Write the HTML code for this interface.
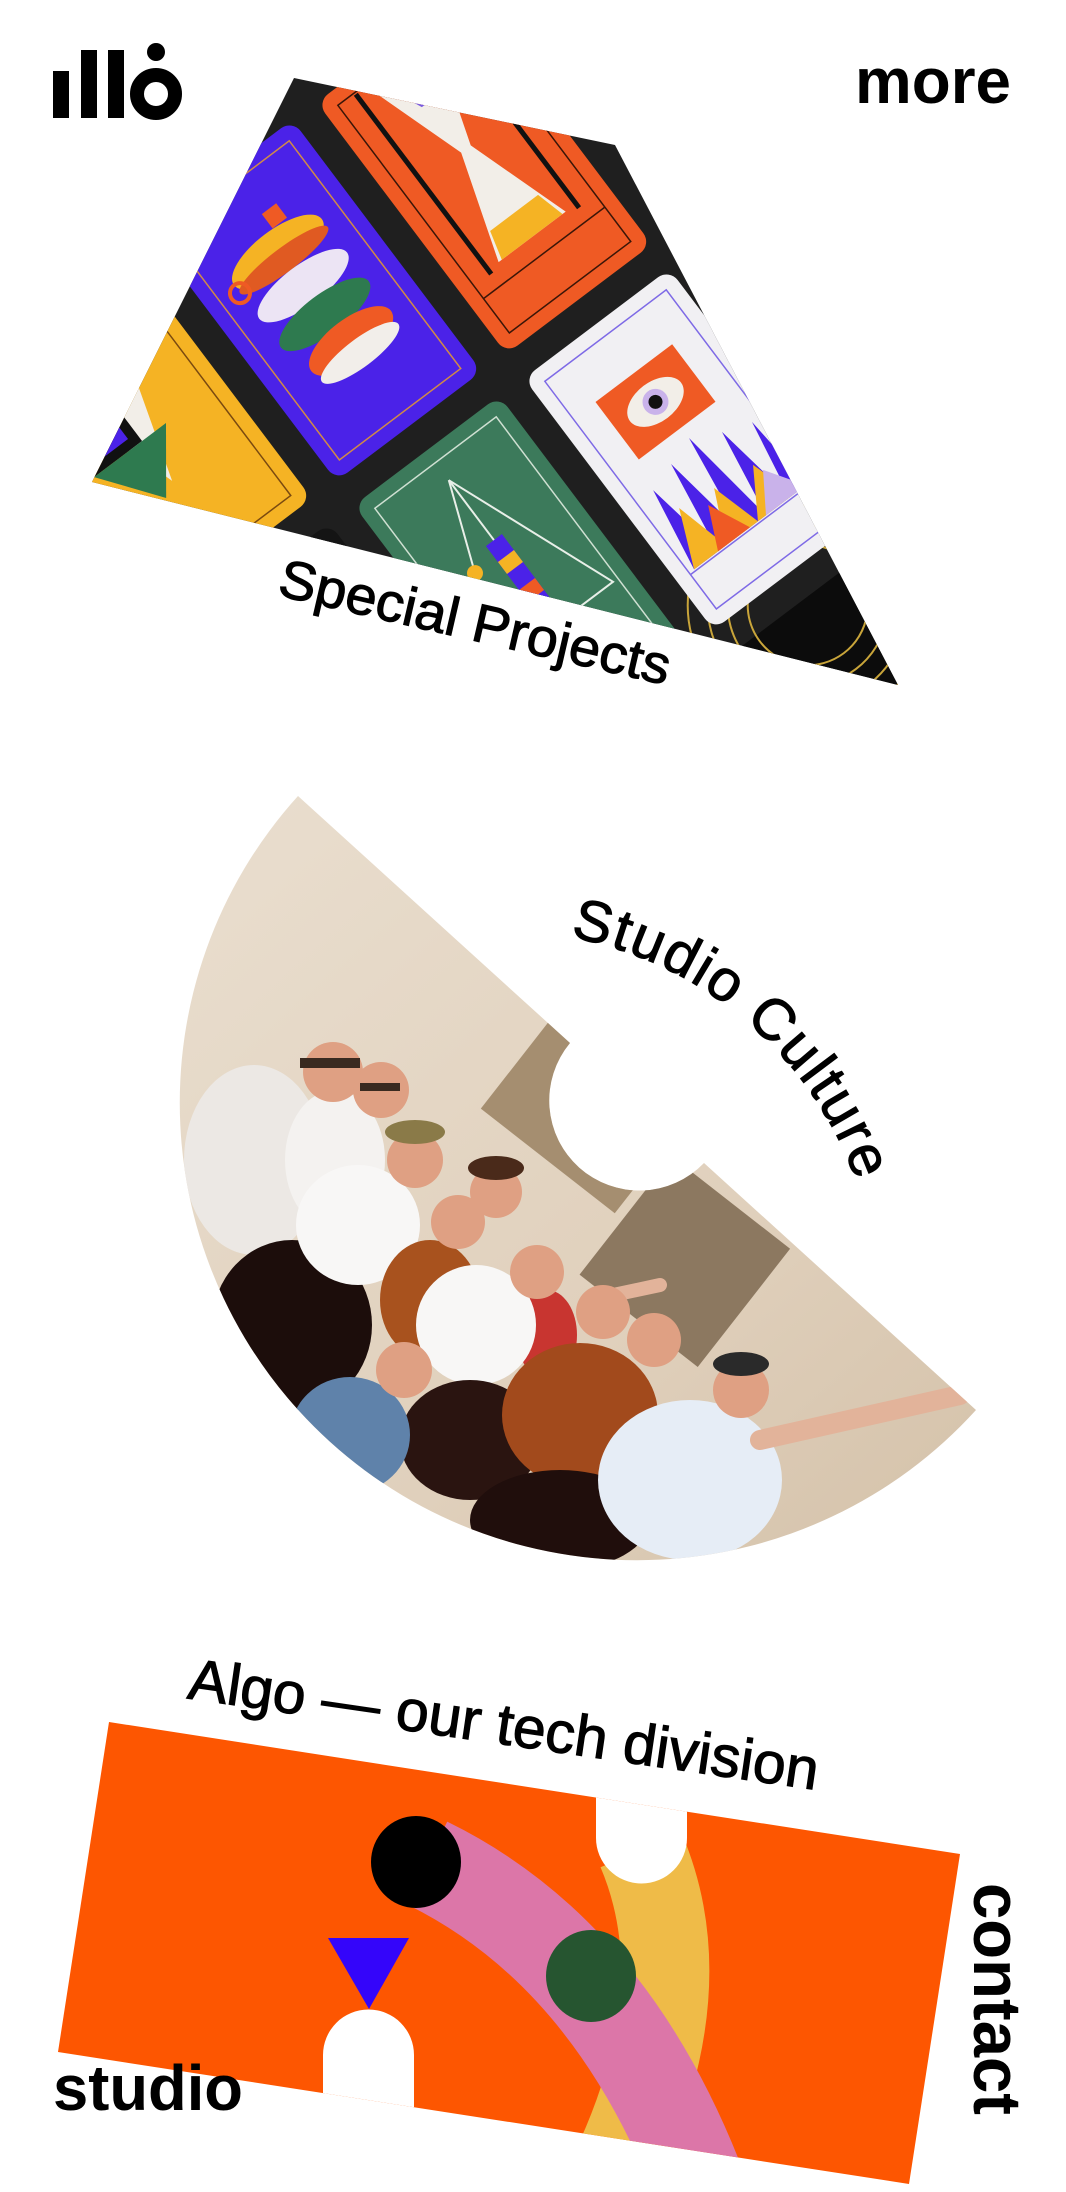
<!DOCTYPE html>
<html><head><meta charset="utf-8">
<style>
html,body{margin:0;padding:0;background:#fff;}
body{width:1066px;height:2192px;overflow:hidden;}
svg{display:block}
text{font-family:"Liberation Sans",sans-serif;fill:#000;}
.lbl{stroke:#000;stroke-width:1.1px;}
.nav{font-weight:bold;}
</style></head>
<body>
<svg width="1066" height="2192" viewBox="0 0 1066 2192" xmlns="http://www.w3.org/2000/svg">
<defs>
  <clipPath id="dia"><polygon points="294,78 615,145 898,685 92,482"/></clipPath>
  <clipPath id="disc"><path d="M298,796 A457,457 0 0 0 976,1410 L704,1163 A90,90 0 0 1 570,1043 Z"/></clipPath>
  <clipPath id="quad"><polygon points="109,1722 960,1854 909,2184 58,2052"/></clipPath>
  <linearGradient id="wall" x1="0" y1="0" x2="1" y2="1">
    <stop offset="0" stop-color="#eadfd0"/><stop offset="0.6" stop-color="#e0d0bc"/><stop offset="1" stop-color="#d2bfa6"/>
  </linearGradient>
  <path id="scarc" d="M570,937 A377,377 0 0 1 870,1230"/>
</defs>

<!-- logo -->
<rect x="53" y="71" width="16" height="47" fill="#000"/>
<rect x="81" y="50" width="16" height="68" fill="#000"/>
<rect x="108" y="50" width="16" height="68" fill="#000"/>
<circle cx="156" cy="94" r="19" fill="none" stroke="#000" stroke-width="14"/>
<circle cx="156" cy="52" r="9" fill="#000"/>
<text x="855" y="103" font-size="64" class="nav" textLength="156" lengthAdjust="spacingAndGlyphs">more</text>

<!-- special projects -->
<g clip-path="url(#dia)">
  <rect x="0" y="0" width="1066" height="720" fill="#1f1f1f"/>
  <!-- dark cards -->
  <g transform="translate(107,24) rotate(-37)"><rect x="-91" y="-157" width="182" height="315" rx="14" fill="#262626"/></g>
  <g transform="translate(351,703) rotate(-37)"><rect x="-91" y="-157" width="182" height="315" rx="14" fill="#141414"/></g>
  <g transform="translate(898,725) rotate(-37)"><rect x="-91" y="-157" width="182" height="315" rx="14" fill="#0c0c0c"/>
    <g fill="none" stroke="#c9a53a" stroke-width="2"><circle cx="0" cy="-150" r="60"/><circle cx="0" cy="-150" r="80"/><circle cx="0" cy="-150" r="100"/><circle cx="0" cy="-150" r="120"/></g></g>
  <!-- purple -->
  <g transform="translate(314,300) rotate(-37)">
    <rect x="-91" y="-157" width="182" height="315" rx="14" fill="#4b22e8"/>
    <rect x="-76" y="-142" width="152" height="285" fill="none" stroke="#d08a48" stroke-width="1.5"/>
    <ellipse cx="0" cy="-60" rx="55" ry="22" fill="#f5b324"/>
    <ellipse cx="0" cy="-50" rx="55" ry="12" fill="#e05a22"/>
    <ellipse cx="0" cy="-18" rx="55" ry="20" fill="#ece4f4"/>
    <ellipse cx="0" cy="18" rx="55" ry="20" fill="#2e7a4f"/>
    <ellipse cx="5" cy="55" rx="50" ry="22" fill="#ef5a24"/>
    <ellipse cx="5" cy="70" rx="48" ry="14" fill="#f2eeea"/>
    <circle cx="-55" cy="-50" r="10" fill="none" stroke="#ef5a24" stroke-width="4"/>
    <rect x="10" y="-100" width="18" height="18" fill="#ef5a24"/>
  </g>
  <!-- orange -->
  <g transform="translate(484,173) rotate(-37)">
    <rect x="-91" y="-157" width="182" height="315" rx="14" fill="#ef5a24"/>
    <rect x="-76" y="-142" width="152" height="285" fill="none" stroke="#3a1608" stroke-width="1.5"/>
    <line x1="-76" y1="100" x2="76" y2="100" stroke="#3a1608" stroke-width="1.5"/>
    <polygon points="-42,-140 42,-140 6,-30 42,80 -42,80 -6,-30" fill="#f2eee8"/>
    <polygon points="-30,-135 30,-135 10,-90 -10,-90" fill="#7a5ae0"/>
    <polygon points="-30,50 30,50 38,80 -38,80" fill="#f5b324"/>
    <line x1="-55" y1="-140" x2="-55" y2="85" stroke="#111" stroke-width="5"/>
    <line x1="55" y1="-140" x2="55" y2="85" stroke="#111" stroke-width="5"/>
  </g>
  <!-- white -->
  <g transform="translate(691,449) rotate(-37)">
    <rect x="-91" y="-157" width="182" height="315" rx="14" fill="#f1f0f3"/>
    <rect x="-76" y="-142" width="152" height="285" fill="none" stroke="#7e6ae6" stroke-width="1.5"/>
    <line x1="-76" y1="100" x2="76" y2="100" stroke="#7e6ae6" stroke-width="1.5"/>
    <rect x="-48" y="-95" width="96" height="72" fill="#ef5a24"/>
    <ellipse cx="0" cy="-59" rx="32" ry="20" fill="#f2eee8"/>
    <circle cx="0" cy="-59" r="13" fill="#c9b2ea"/><circle cx="0" cy="-59" r="7" fill="#111"/>
    <polygon points="-70,98 -55,10 -40,98 -25,0 -10,98 5,-10 20,98 35,5 50,98 65,15 72,98" fill="#4b22e8"/>
    <polygon points="-70,98 -45,40 -30,98 -5,45 10,98 40,50 55,98" fill="#f5b324"/>
    <polygon points="-40,98 -20,55 0,98" fill="#ef5a24"/>
    <polygon points="20,98 45,60 70,98" fill="#c9b2ea"/>
  </g>
  <!-- green -->
  <g transform="translate(521,576) rotate(-37)">
    <rect x="-91" y="-157" width="182" height="315" rx="14" fill="#3c7a5b"/>
    <rect x="-76" y="-142" width="152" height="285" fill="none" stroke="#cfe0d2" stroke-width="1.5"/>
    <polyline points="0,-120 -70,60 70,60 0,-120" fill="none" stroke="#e8efe8" stroke-width="2"/>
    <line x1="0" y1="-120" x2="0" y2="-40" stroke="#e8efe8" stroke-width="2"/>
    <rect x="-10" y="-45" width="20" height="110" fill="#4b22e8"/>
    <rect x="-10" y="-25" width="20" height="15" fill="#f5b324"/>
    <rect x="-10" y="10" width="20" height="15" fill="#ef5a24"/>
    <circle cx="-35" cy="-30" r="8" fill="#f5b324"/>
  </g>
  <!-- yellow -->
  <g transform="translate(144,427) rotate(-37)">
    <rect x="-91" y="-157" width="182" height="315" rx="14" fill="#f5b324"/>
    <rect x="-76" y="-142" width="152" height="285" fill="none" stroke="#7a4a10" stroke-width="1.5"/>
    <polygon points="-60,-100 40,-100 -10,60" fill="#f2eee8"/>
    <rect x="-70" y="-80" width="60" height="90" fill="#111"/>
    <rect x="-70" y="-40" width="50" height="40" fill="#4b22e8"/>
    <polygon points="-70,10 20,10 -25,70" fill="#2e7a4f"/>
    <polygon points="-70,-110 0,-110 -35,-60" fill="#c9b2ea"/>
  </g>
</g>
<text x="0" y="0" font-size="54" class="lbl" text-anchor="middle" textLength="400" lengthAdjust="spacingAndGlyphs" transform="translate(471,640) rotate(13)">Special Projects</text>

<!-- studio culture -->
<g clip-path="url(#disc)">
  <rect x="150" y="780" width="900" height="800" fill="url(#wall)"/>
  <g transform="rotate(38 550 1150)">
    <rect x="470" y="1010" width="170" height="150" fill="#a58e70"/>
    <rect x="650" y="1080" width="150" height="150" fill="#8c7860"/>
  </g>
  <ellipse cx="254" cy="1160" rx="70" ry="95" fill="#ece8e4"/>
  <ellipse cx="335" cy="1160" rx="50" ry="70" fill="#f4f2f0"/>
  <ellipse cx="292" cy="1325" rx="80" ry="85" fill="#1c0d0b"/>
  <ellipse cx="358" cy="1225" rx="62" ry="60" fill="#f8f7f6"/>
  <ellipse cx="430" cy="1300" rx="50" ry="60" fill="#a8521e"/>
  <ellipse cx="547" cy="1335" rx="30" ry="45" fill="#c83530"/>
  <ellipse cx="476" cy="1325" rx="60" ry="60" fill="#f8f7f6"/>
  <ellipse cx="470" cy="1440" rx="70" ry="60" fill="#2a1410"/>
  <ellipse cx="350" cy="1435" rx="60" ry="58" fill="#5f82aa"/>
  <ellipse cx="580" cy="1415" rx="78" ry="72" fill="#a24a1c"/>
  <ellipse cx="560" cy="1520" rx="90" ry="50" fill="#200e0c"/>
  <ellipse cx="690" cy="1480" rx="92" ry="80" fill="#e6edf6"/>
  <path d="M760,1440 L960,1395" stroke="#e2b39a" stroke-width="20" stroke-linecap="round"/>
  <path d="M590,1300 L660,1285" stroke="#e2b39a" stroke-width="14" stroke-linecap="round"/>
  <g fill="#dfa083">
    <circle cx="333" cy="1072" r="30"/><circle cx="381" cy="1090" r="28"/>
    <circle cx="415" cy="1160" r="28"/><circle cx="496" cy="1192" r="26"/>
    <circle cx="458" cy="1222" r="27"/><circle cx="537" cy="1272" r="27"/>
    <circle cx="603" cy="1312" r="27"/><circle cx="654" cy="1340" r="27"/>
    <circle cx="404" cy="1370" r="28"/><circle cx="741" cy="1390" r="28"/>
  </g>
  <g fill="#3a2a20">
    <path d="M300,1058 h60 v10 h-60z"/><path d="M360,1083 h40 v8 h-40z"/>
    <ellipse cx="415" cy="1132" rx="30" ry="12" fill="#8a7a48"/>
    <ellipse cx="496" cy="1168" rx="28" ry="12" fill="#4a2a1a"/>
    <ellipse cx="741" cy="1364" rx="28" ry="12" fill="#2a2a2a"/>
  </g>
</g>
<text font-size="58" class="lbl" letter-spacing="2"><textPath href="#scarc">Studio Culture</textPath></text>

<!-- algo -->
<text x="0" y="0" font-size="58" class="lbl" text-anchor="middle" textLength="636" lengthAdjust="spacingAndGlyphs" transform="translate(501,1744) rotate(8.3)">Algo — our tech division</text>
<g clip-path="url(#quad)">
  <rect x="0" y="1700" width="1066" height="492" fill="#fd5601"/>
  <path d="M641,1850 Q705,2000 600,2200" stroke="#efbb48" stroke-width="88" fill="none"/>
  <path d="M427,1863 Q615,1955 705,2200" stroke="#dc76a8" stroke-width="92" fill="none"/>
  <ellipse cx="416" cy="1862" rx="45" ry="46" fill="#000"/>
  <ellipse cx="591" cy="1976" rx="45" ry="46" fill="#265530"/>
  <polygon points="328,1938 409,1938 369,2009" fill="#3405fa"/>
  <path d="M596,1780 L596,1838 A45.5,45.5 0 0 0 687,1838 L687,1780 Z" fill="#fff"/>
  <path d="M323,2200 L323,2055 A45.5,45.5 0 0 1 414,2055 L414,2200 Z" fill="#fff"/>
</g>
<text x="53" y="2110" font-size="64" class="nav" textLength="190" lengthAdjust="spacingAndGlyphs">studio</text>
<text x="0" y="0" font-size="68" class="nav" text-anchor="middle" textLength="232" lengthAdjust="spacingAndGlyphs" transform="translate(974,1999) rotate(90)">contact</text>
</svg>
</body></html>
